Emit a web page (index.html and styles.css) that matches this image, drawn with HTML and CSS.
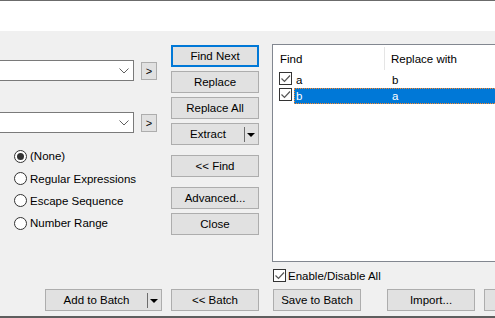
FILE: index.html
```html
<!DOCTYPE html>
<html lang="en">
<head>
  <meta charset="UTF-8" />
  <title>Replace</title>
  <link rel="stylesheet" href="styles.css">
</head>
<body>

<div class="window">
  <div class="banner"></div>

  <div class="panel">
    <div class="panel-body">

      <!-- 検索語と置換語 -->
      <div class="left">
        <div class="combo-row first">
          <div class="combo">
            <svg class="chevron" width="10" height="6" viewBox="0 0 10 6"><path d="M0.5 0.5 L5 5 L9.5 0.5" fill="none" stroke="#606060" stroke-width="1"/></svg>
          </div>
          <button class="mini">&gt;</button>
        </div>
        <div class="combo-row second">
          <div class="combo">
            <svg class="chevron" width="10" height="6" viewBox="0 0 10 6"><path d="M0.5 0.5 L5 5 L9.5 0.5" fill="none" stroke="#606060" stroke-width="1"/></svg>
          </div>
          <button class="mini">&gt;</button>
        </div>

        <div class="radios">
          <div class="radio-row"><span class="radio on"></span>(None)</div>
          <div class="radio-row"><span class="radio"></span>Regular Expressions</div>
          <div class="radio-row"><span class="radio"></span>Escape Sequence</div>
          <div class="radio-row"><span class="radio"></span>Number Range</div>
        </div>
      </div>

      <!-- コマンド -->
      <div class="commands">
        <button class="btn default">Find Next</button>
        <button class="btn">Replace</button>
        <button class="btn">Replace All</button>
        <button class="btn split"><span class="label">Extract</span><span class="split-line"></span><span class="caret"></span></button>
        <button class="btn group">&lt;&lt; Find</button>
        <button class="btn group">Advanced...</button>
        <button class="btn">Close</button>
      </div>

      <!-- 一括リスト -->
      <div class="list-area">
        <div class="list">
          <div class="list-head">
            <div class="head-cell first">Find</div>
            <div class="head-cell">Replace with</div>
          </div>
          <div class="list-row">
            <span class="check"><svg width="11" height="11" viewBox="0 0 11 11"><path d="M1.5 5.5 L4.5 8.5 L10 2.5" fill="none" stroke="#555" stroke-width="1.2"/></svg></span>
            <div class="cells">
              <div class="cell first">a</div>
              <div class="cell">b</div>
            </div>
          </div>
          <div class="list-row">
            <span class="check"><svg width="11" height="11" viewBox="0 0 11 11"><path d="M1.5 5.5 L4.5 8.5 L10 2.5" fill="none" stroke="#555" stroke-width="1.2"/></svg></span>
            <div class="cells selected">
              <div class="cell first">b</div>
              <div class="cell">a</div>
            </div>
          </div>
        </div>
        <div class="enable-row">
          <span class="check"><svg width="11" height="11" viewBox="0 0 11 11"><path d="M1.5 5.5 L4.5 8.5 L10 2.5" fill="none" stroke="#555" stroke-width="1.2"/></svg></span>
          Enable/Disable All
        </div>
      </div>

    </div>

    <div class="bottom-row">
      <button class="btn split wide"><span class="label">Add to Batch</span><span class="split-line"></span><span class="caret"></span></button>
      <button class="btn">&lt;&lt; Batch</button>
      <button class="btn save">Save to Batch</button>
      <button class="btn import">Import...</button>
      <button class="btn last"></button>
    </div>
  </div>
</div>

</body>
</html>
```

FILE: styles.css
```css
body {
  margin: 0;
  width: 495px;
  height: 318px;
  overflow: hidden;
  font-family: 'Liberation Sans', Arial, sans-serif;
  font-size: 11.5px;
  color: #000;
}

.window {
  border-top: 1px solid #6b6b6b;
  border-bottom: 2px solid #5e5e5e;
}

.banner {
  height: 30px;
  background: #fff;
}

.panel {
  height: 285px;
  background: #f0f0f0;
}

.panel-body {
  display: flex;
  height: 245px;
  padding-top: 13px;
}

/* left */
.left {
  width: 171px;
  flex: none;
}

.combo-row {
  display: flex;
  align-items: center;
}

.combo-row.first {
  margin-top: 16px;
}

.combo-row.second {
  margin-top: 31px;
}

.combo {
  box-sizing: border-box;
  width: 135px;
  height: 21px;
  margin-left: -1px;
  background: #fff;
  border: 1px solid #7a7a7a;
  display: flex;
  align-items: center;
  justify-content: flex-end;
  padding-right: 4px;
}

.mini {
  box-sizing: border-box;
  width: 16px;
  height: 18px;
  margin-left: 7px;
  padding: 0;
  background: #e1e1e1;
  border: 1px solid #adadad;
  font-family: inherit;
  font-size: 11px;
  line-height: 14px;
  color: #000;
}

.radios {
  margin-top: 12px;
  padding-left: 14px;
}

.radio-row {
  height: 22.4px;
  display: flex;
  align-items: center;
}

.radio {
  box-sizing: border-box;
  width: 13px;
  height: 13px;
  border: 1px solid #333;
  border-radius: 50%;
  background: #fff;
  margin-right: 3px;
  display: flex;
  align-items: center;
  justify-content: center;
}

.radio.on::after {
  content: "";
  width: 7px;
  height: 7px;
  border-radius: 50%;
  background: #333;
}

/* buttons */
.btn {
  box-sizing: border-box;
  height: 22px;
  padding: 0;
  background: #e1e1e1;
  border: 1px solid #adadad;
  font-family: inherit;
  font-size: 11.5px;
  color: #000;
  flex: none;
  white-space: nowrap;
}

.commands {
  width: 88px;
  flex: none;
  display: flex;
  flex-direction: column;
  gap: 4px;
  padding-top: 1px;
}

.commands .btn {
  width: 88px;
}

.btn.default {
  border: 2px solid #0078d7;
}

.btn.group {
  margin-top: 6px;
}

.split {
  display: flex;
  align-items: center;
}

.split .label {
  flex: 1;
  text-align: center;
}

.split-line {
  width: 1px;
  height: 15px;
  background: #6d6d6d;
}

.caret {
  width: 0;
  height: 0;
  border-left: 4px solid transparent;
  border-right: 4px solid transparent;
  border-top: 4px solid #000;
  margin: 1px 3px 0 2px;
}

/* list */
.list-area {
  margin-left: 13px;
  flex: none;
  width: 240px;
}

.list {
  box-sizing: border-box;
  height: 218px;
  background: #fff;
  border: 1px solid #828790;
}

.list-head {
  display: flex;
  height: 27px;
  align-items: center;
}

.head-cell {
  padding-left: 6px;
}

.head-cell.first {
  box-sizing: border-box;
  width: 112px;
  padding-left: 7px;
  height: 23px;
  line-height: 25px;
  border-right: 1px solid #e5e5e5;
}

.list-row {
  display: flex;
  height: 16px;
}

.check {
  box-sizing: border-box;
  width: 13px;
  height: 13px;
  border: 1px solid #333;
  background: #fff;
  flex: none;
  display: flex;
  align-items: center;
  justify-content: center;
}

.list-row .check {
  margin-left: 6px;
  margin-right: 2px;
}

.cells {
  display: flex;
  flex: 1;
  align-items: center;
  box-sizing: border-box;
  border: 1px dotted transparent;
}

.cells.selected {
  background: #0078d7;
  color: #fff;
  border-color: #ff8728;
}

.cell {
  padding-left: 6px;
}

.cell.first {
  width: 90px;
  padding-left: 1px;
}

.enable-row {
  display: flex;
  align-items: center;
  margin-top: 7px;
  margin-left: 1px;
  height: 13px;
}

.enable-row .check {
  margin-right: 2px;
}

/* bottom */
.bottom-row {
  display: flex;
  padding-left: 45px;
}

.bottom-row .btn {
  width: 88px;
  margin-right: 14px;
}

.bottom-row .btn.wide {
  width: 117px;
  margin-right: 9px;
}

.bottom-row .btn.save {
  margin-right: 26px;
}

.bottom-row .btn.import {
  margin-right: 9px;
}
```
